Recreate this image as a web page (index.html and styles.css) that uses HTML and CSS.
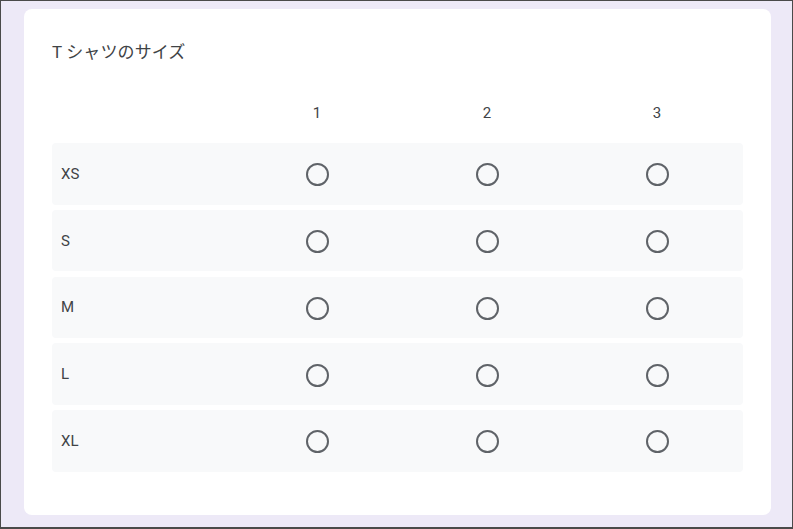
FILE: index.html
```html
<!DOCTYPE html>
<html lang="ja">
<head>
<meta charset="utf-8">
<title>T シャツのサイズ</title>
<link rel="stylesheet" href="styles.css">
</head>
<body>
<div class="frame">
  <div class="card">
    <div class="title">T シャツのサイズ</div>
    <div class="grid-head">
      <div class="cell label"></div>
      <div class="cell">1</div>
      <div class="cell">2</div>
      <div class="cell">3</div>
    </div>
    <div class="rows">
      <div class="row"><div class="cell label">XS</div><div class="cell"><span class="radio"></span></div><div class="cell"><span class="radio"></span></div><div class="cell"><span class="radio"></span></div></div>
      <div class="row"><div class="cell label">S</div><div class="cell"><span class="radio"></span></div><div class="cell"><span class="radio"></span></div><div class="cell"><span class="radio"></span></div></div>
      <div class="row"><div class="cell label">M</div><div class="cell"><span class="radio"></span></div><div class="cell"><span class="radio"></span></div><div class="cell"><span class="radio"></span></div></div>
      <div class="row"><div class="cell label">L</div><div class="cell"><span class="radio"></span></div><div class="cell"><span class="radio"></span></div><div class="cell"><span class="radio"></span></div></div>
      <div class="row"><div class="cell label">XL</div><div class="cell"><span class="radio"></span></div><div class="cell"><span class="radio"></span></div><div class="cell"><span class="radio"></span></div></div>
    </div>
  </div>
</div>
</body>
</html>
```
FILE: styles.css
```css
html, body {
  margin: 0;
  padding: 0;
}
body {
  font-family: Roboto, "Noto Sans CJK JP", sans-serif;
  color: #3c4043;
}
.frame {
  box-sizing: border-box;
  width: 793px;
  height: 529px;
  background: #ede9f7;
  border: 1px solid #4a4a4a;
  border-bottom-width: 2px;
  padding: 8px 21px 0 23px;
}
.card {
  box-sizing: border-box;
  width: 747px;
  height: 506px;
  background: #ffffff;
  border-radius: 8px;
  padding: 31px 28px 0 28px;
}
.title {
  font-family: Roboto, "Noto Sans CJK JP", sans-serif;
  font-size: 17px;
  line-height: 24px;
  color: #404346;
  letter-spacing: 0.1px;
}
.grid-head {
  display: grid;
  grid-template-columns: 180px 170px 170px 170px;
  height: 40px;
  margin-top: 29px;
  margin-bottom: 10px;
  align-items: center;
  font-size: 15px;
  color: #404346;
}
.rows {
  display: flex;
  flex-direction: column;
  gap: 5.25px;
}
.row {
  display: grid;
  grid-template-columns: 180px 170px 170px 170px;
  width: 691px;
  height: 61.5px;
  background: #f8f9fa;
  border-radius: 4px;
  align-items: center;
  font-size: 15px;
  color: #404346;
}
.cell {
  display: flex;
  justify-content: center;
  align-items: center;
}
.cell.label {
  justify-content: flex-start;
  padding-left: 9px;
}
.radio {
  display: block;
  box-sizing: border-box;
  width: 23px;
  height: 23px;
  border: 2px solid #5f6368;
  border-radius: 50%;
  margin-top: 2px;
}
```
